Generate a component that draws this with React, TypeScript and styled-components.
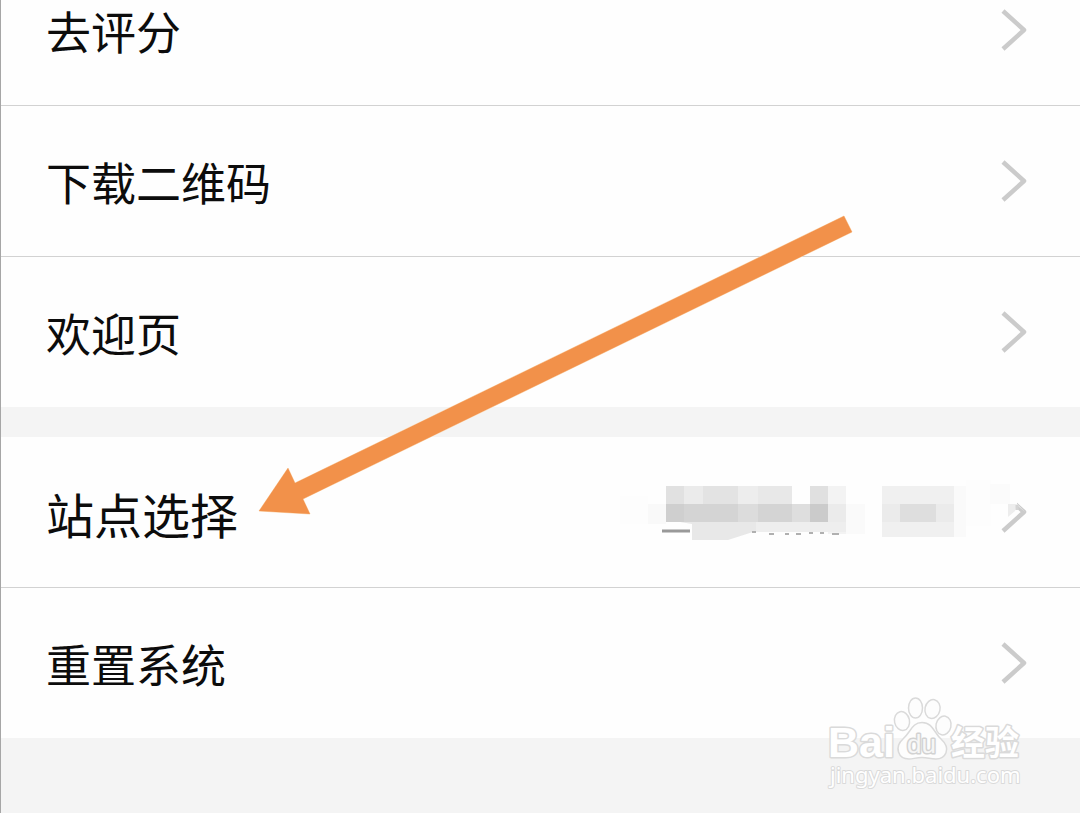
import React from "react";
import styled, { createGlobalStyle } from "styled-components";

const GlobalStyle = createGlobalStyle`
  * { box-sizing: border-box; }
  html, body { margin: 0; min-height: 100%; background: #f4f4f4; }
  body { font-family: "Noto Sans CJK SC", sans-serif; color: #0c0c0c; }
`;

const Page = styled.main`
  position: relative;
  min-height: 100vh;
  overflow: hidden;
  border-left: 1px solid #a6a6a6;
  background: #f4f4f4;
`;

/* The list is scrolled so that its first row is partly above the window. */
const Groups = styled.div`
  display: flex;
  flex-direction: column;
  gap: 30px;
  margin-top: -45px;
`;

const Group = styled.ul`
  list-style: none;
  margin: 0;
  padding: 0;
  background: #fefefe;
`;

const Item = styled.li`
  position: relative;
  & + & {
    border-top: 1px solid #d2d2d2;
  }
`;

const RowButton = styled.button<{ $large?: boolean }>`
  display: flex;
  align-items: center;
  justify-content: space-between;
  width: 100%;
  height: 150px;
  padding: 0 52px 0 45px;
  border: 0;
  background: transparent;
  color: inherit;
  font-family: inherit;
  font-size: ${(p) => (p.$large ? 48 : 45)}px;
  font-weight: 400;
  line-height: 56px;
  text-align: left;
  cursor: pointer;
`;

const Label = styled.span`
  padding-top: 1px;
`;

const ChevronIcon = styled.svg`
  flex: none;
  width: 28px;
  height: 44px;
`;

const Mosaic = styled.svg`
  position: absolute;
  top: 33px;
  right: 30px;
  width: 430px;
  height: 80px;
  pointer-events: none;
`;

const Pointer = styled.svg`
  position: absolute;
  top: 210px;
  left: 249px;
  width: 610px;
  height: 310px;
  pointer-events: none;
`;

const Watermark = styled.svg`
  position: absolute;
  top: 690px;
  right: 50px;
  width: 210px;
  height: 110px;
  pointer-events: none;
`;

function Chevron() {
  return (
    <ChevronIcon viewBox="0 0 28 44" aria-hidden="true">
      <path d="M3 3 L24 22 L3 41" fill="none" stroke="#cbcbcb" strokeWidth="4.5" strokeLinejoin="round" />
    </ChevronIcon>
  );
}

/* x, y, width, height, colour */
const blocks: [number, number, number, number, string][] = [
  [608, 496, 40, 28, "#fdfdfd"],
  [648, 504, 18, 20, "#f9f9f9"],
  [666, 486, 18, 36, "#e1e1e1"],
  [684, 486, 19, 36, "#ebebeb"],
  [703, 486, 35, 36, "#e3e3e3"],
  [738, 486, 20, 36, "#ededed"],
  [758, 486, 34, 36, "#e8e8e8"],
  [792, 504, 18, 18, "#dedede"],
  [810, 486, 18, 36, "#e0e0e0"],
  [828, 486, 18, 48, "#f3f3f3"],
  [846, 504, 19, 30, "#fafafa"],
  [666, 504, 18, 18, "#cfcfcf"],
  [684, 504, 54, 18, "#d4d4d4"],
  [738, 504, 20, 18, "#dcdcdc"],
  [758, 504, 34, 18, "#d4d4d4"],
  [810, 504, 18, 18, "#cbcbcb"],
  [828, 504, 18, 18, "#ebebeb"],
  [756, 522, 90, 10, "#eeeeee"],
  [882, 486, 72, 51, "#f0f0f0"],
  [882, 504, 18, 18, "#ebebeb"],
  [900, 504, 36, 18, "#dedede"],
  [936, 504, 18, 18, "#ebebeb"],
  [954, 486, 12, 51, "#fafafa"],
  [966, 480, 25, 46, "#fdfdfd"],
  [990, 484, 20, 20, "#fbfbfb"],
];

function HiddenValue() {
  return (
    <Mosaic viewBox="620 470 430 80" aria-hidden="true">
      <path d="M990 480H1017V505L1025 512L1017 504L1015 514L1005 522H990Z" fill="#fefefe" />
      {blocks.map(([x, y, w, h, c], i) => (
        <rect key={i} x={x} y={y} width={w} height={h} fill={c} />
      ))}
      <path d="M680 522H756V531L728 540H692V524Z" fill="#e8e8e8" />
      <path d="M662 531H690" stroke="#999" strokeWidth="3" />
      <path d="M752 532H756M769 534H774M785 534H789M796 534H801M809 533H813M820 533H824M832 534H839" stroke="#b0b0b0" strokeWidth="2" />
      <path d="M1008 504H1017L1015 511L1008 517Z" fill="#ededed" />
      <path d="M1017 505V510" stroke="#d4d4d4" strokeWidth="3" />
    </Mosaic>
  );
}

function BaiduMark() {
  const outline = {
    fill: "#fff",
    stroke: "#dadada",
    strokeWidth: 3,
    strokeLinejoin: "round" as const,
    paintOrder: "stroke",
  };
  return (
    <Watermark viewBox="820 690 210 110" role="img" aria-label="Baidu 经验">
      <g fill="#fdfdfd" stroke="#dadada" strokeWidth="1.5">
        <ellipse cx="902" cy="721" rx="7.5" ry="9.5" transform="rotate(-12 902 721)" />
        <ellipse cx="915.5" cy="708" rx="7" ry="10" />
        <ellipse cx="932.5" cy="709" rx="7.5" ry="9.5" transform="rotate(12 932.5 709)" />
        <ellipse cx="943.5" cy="725.5" rx="7.5" ry="9.5" transform="rotate(12 943.5 725.5)" />
        <path d="M922 722.5C933 722.5 934 733 941 739C952 749 945 759 936 759C930 759 928 757.500 922 757.500C916 757.500 913 759 909 759C898 759 894 747 903 739C911 732 912 722.500 922 722.500Z" />
      </g>
      <text x="828" y="757" fontFamily="Liberation Sans, sans-serif" fontSize="43" fontWeight="700" {...outline}>Bai</text>
      <text x="907" y="753" fontFamily="Liberation Sans, sans-serif" fontSize="26" fontWeight="400" {...outline} stroke="#d2d2d2" fill="#f6f6f6">du</text>
      <text x="951" y="755" fontFamily="Noto Sans CJK SC, sans-serif" fontSize="34" fontWeight="700" {...outline}>经验</text>
      <text x="830" y="783" fontFamily="Noto Sans, sans-serif" fontSize="22" {...outline} strokeWidth={2}>jingyan.baidu.com</text>
    </Watermark>
  );
}

type Entry = { label: string; large?: boolean; hidden?: boolean };

const groups: Entry[][] = [
  [{ label: "去评分" }, { label: "下载二维码" }, { label: "欢迎页" }],
  [{ label: "站点选择", large: true, hidden: true }, { label: "重置系统" }],
];

export default function App() {
  return (
    <>
      <GlobalStyle />
      <Page>
        <Groups>
          {groups.map((group, i) => (
            <Group key={i}>
              {group.map((entry) => (
                <Item key={entry.label}>
                  <RowButton type="button" $large={entry.large}>
                    <Label>{entry.label}</Label>
                    <Chevron />
                  </RowButton>
                  {entry.hidden && <HiddenValue />}
                </Item>
              ))}
            </Group>
          ))}
        </Groups>
        <Pointer viewBox="250 210 610 310" aria-hidden="true">
          <path d="M259 511L288 468L295 483L844 216L852 232L303 499L310 514Z" fill="#f2914a" stroke="#fbd9b5" strokeWidth="1" paintOrder="stroke" />
        </Pointer>
        <BaiduMark />
      </Page>
    </>
  );
}
